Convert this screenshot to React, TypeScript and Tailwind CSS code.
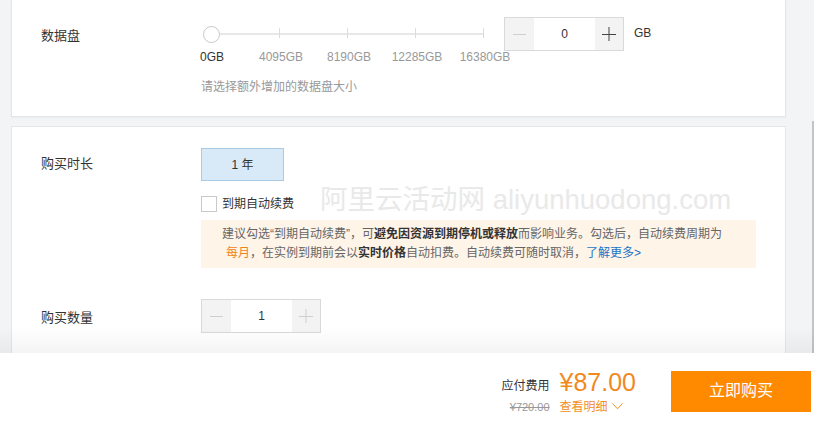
import React from "react";

const font = { fontFamily: '"Liberation Sans", "Noto Sans CJK SC", sans-serif' };

function Stepper({ value, plusActive }: { value: string; plusActive: boolean }) {
  return (
    <div className="flex h-[34px] w-[120px] border border-[#d9d9d9] bg-white">
      <div className="flex w-[29px] items-center justify-center bg-[#f3f3f3]">
        <div className="h-[1px] w-[13px] bg-[#cfcfcf]" />
      </div>
      <div className="flex flex-1 items-center justify-center text-[12px] text-[#333]">{value}</div>
      <div className="relative flex w-[28px] items-center justify-center bg-[#f3f3f3]">
        <div className={plusActive ? "h-[1px] w-[14px] bg-[#444]" : "h-[1px] w-[14px] bg-[#cfcfcf]"} />
        <div
          className={
            plusActive
              ? "absolute left-1/2 top-1/2 h-[14px] w-[1px] -translate-x-1/2 -translate-y-1/2 bg-[#444]"
              : "absolute left-1/2 top-1/2 h-[14px] w-[1px] -translate-x-1/2 -translate-y-1/2 bg-[#cfcfcf]"
          }
        />
      </div>
    </div>
  );
}

function Slider() {
  const ticks = ["left-[78px]", "left-[146px]", "left-[214px]", "left-[282px]"];
  const labels: [string, string, string][] = [
    ["0GB", "left-[11px]", "text-[#333]"],
    ["4095GB", "left-[80px]", "text-[#999]"],
    ["8190GB", "left-[148px]", "text-[#999]"],
    ["12285GB", "left-[216px]", "text-[#999]"],
    ["16380GB", "left-[284px]", "text-[#999]"],
  ];
  return (
    <div className="relative h-[50px] w-[303px]">
      <div className="absolute left-[10px] top-[16px] h-[2px] w-[272px] bg-[#e8e8e8]" />
      {ticks.map((t) => (
        <div key={t} className={"absolute top-[11px] h-[10px] w-[1px] bg-[#dcdcdc] " + t} />
      ))}
      <div className="absolute left-[2px] top-[9px] h-[17px] w-[17px] rounded-full border border-[#c8c8c8] bg-white" />
      {labels.map(([txt, l, c]) => (
        <div
          key={txt}
          className={"absolute top-[33px] -translate-x-1/2 whitespace-nowrap text-[12px] leading-[14px] " + l + " " + c}
        >
          {txt}
        </div>
      ))}
    </div>
  );
}

export default function App() {
  return (
    <div className="relative flex h-[429px] w-[814px] flex-col overflow-hidden bg-[#f3f4f5]" style={font}>
      <div className="relative flex-1 overflow-hidden">
        {/* Card 1 */}
        <div className="ml-[11px] flex h-[117px] w-[775px] border-x border-b border-[#e6e6e6] bg-white pt-[17px] shadow-[0_1px_2px_rgba(0,0,0,0.04)]">
          <div className="w-[189px] pl-[29px] pt-[2px] text-[13px] leading-[34px] text-[#333]">数据盘</div>
          <div className="flex flex-col">
            <div className="flex items-start">
              <Slider />
              <Stepper value="0" plusActive={true} />
              <div className="ml-[10px] text-[12px] leading-[32px] text-[#333]">GB</div>
            </div>
            <div className="mt-[12px] text-[12px] leading-[16px] text-[#999]">请选择额外增加的数据盘大小</div>
          </div>
        </div>

        {/* Card 2 */}
        <div className="ml-[11px] mt-[9px] h-[260px] w-[775px] border-x border-t border-[#e6e6e6] bg-white pt-[21px]">
          <div className="flex">
            <div className="w-[189px] pl-[29px] text-[13px] leading-[32px] text-[#333]">购买时长</div>
            <div className="flex flex-col">
              <div className="flex h-[33px] w-[83px] items-center justify-center border border-[#a9cbe6] bg-[#d8eaf8] text-[12px] text-[#333]">
                1 年
              </div>
              <div className="mt-[15px] flex items-center">
                <div className="h-[16px] w-[16px] border border-[#c9c9c9] bg-white" />
                <div className="ml-[5px] text-[12px] leading-[16px] text-[#333]">到期自动续费</div>
              </div>
              <div className="mt-[8px] w-[555px] whitespace-nowrap bg-[#fff4e8] py-[5px] pl-[21px] text-[12px] leading-[19px] text-[#666]">
                建议勾选“到期自动续费”，可<b className="font-bold text-[#333]">避免因资源到期停机或释放</b>而影响业务。勾选后，自动续费周期为
                <br />
                <span className="ml-[4px] text-[#f0821e]">每月</span>，在实例到期前会以<b className="font-bold text-[#333]">实时价格</b>自动扣费。自动续费可随时取消，
                <span className="text-[#1a73c8]">了解更多&gt;</span>
              </div>
            </div>
          </div>
          <div className="mt-[31px] flex">
            <div className="w-[189px] pl-[29px] pt-[2px] text-[13px] leading-[34px] text-[#333]">购买数量</div>
            <Stepper value="1" plusActive={false} />
          </div>
        </div>

        {/* watermark */}
        <div className="pointer-events-none absolute left-[320px] top-[183px] whitespace-nowrap text-[27.5px] leading-[34px] text-[#e9e9e9]">
          阿里云活动网 aliyunhuodong.com
        </div>

        {/* scrollbar */}
        <div className="absolute right-0 top-[121px] h-[240px] w-[2px] bg-[#c4c4c4]" />

        {/* footer shade */}
        <div className="pointer-events-none absolute bottom-0 left-0 h-[26px] w-full bg-gradient-to-b from-transparent to-[rgba(0,0,0,0.045)]" />
      </div>

      {/* Footer */}
      <div className="flex h-[76px] items-center justify-end bg-white pr-[3px]">
        <div className="grid grid-cols-[auto_auto] items-end gap-x-[10px]">
          <div className="pb-[2px] text-right text-[12px] leading-[16px] text-[#333]">应付费用</div>
          <div className="text-[25px] leading-[28px] text-[#f08a1e]">¥87.00</div>
          <div className="mt-[3px] text-right text-[11px] leading-[16px] text-[#999] line-through">¥720.00</div>
          <div className="mt-[3px] flex items-center text-[12px] leading-[16px] text-[#f0901e]">
            查看明细
            <svg className="ml-[4px]" width="11" height="7" viewBox="0 0 11 7" fill="none">
              <path d="M0.5 0.5 L5.5 5.8 L10.5 0.5" stroke="#f0901e" strokeWidth="1" />
            </svg>
          </div>
        </div>
        <div className="ml-[35px] flex h-[41px] w-[140px] items-center justify-center bg-[#ff8a00] text-[16px] text-white">
          立即购买
        </div>
      </div>
    </div>
  );
}
